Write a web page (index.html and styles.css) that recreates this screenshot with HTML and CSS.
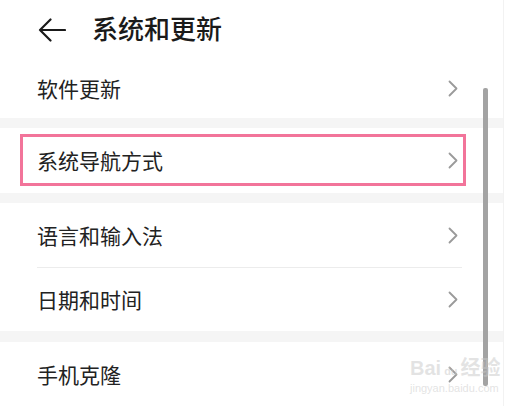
FILE: index.html
```html
<!DOCTYPE html>
<html lang="zh">
<head>
<meta charset="utf-8">
<link rel="stylesheet" href="styles.css">
</head>
<body>
<div class="screen">
  <header class="header">
    <svg class="back" width="28" height="24" viewBox="0 0 28 24"><path d="M27 12H2M12.5 1.5L2 12l10.5 10.5" fill="none" stroke="#1a1a1a" stroke-width="2.2" stroke-linecap="round" stroke-linejoin="round"/></svg>
    <h1 class="title">系统和更新</h1>
  </header>
  <div class="row row-first"><span>软件更新</span><svg class="chev" width="10" height="17" viewBox="0 0 10 17"><path d="M1.5 1.5l7 7-7 7" fill="none" stroke="#9a9a9a" stroke-width="1.8" stroke-linecap="round" stroke-linejoin="round"/></svg></div>
  <div class="band"></div>
  <div class="group-hl">
    <div class="hl-box"><span>系统导航方式</span><svg class="chev" width="10" height="17" viewBox="0 0 10 17"><path d="M1.5 1.5l7 7-7 7" fill="none" stroke="#9a9a9a" stroke-width="1.8" stroke-linecap="round" stroke-linejoin="round"/></svg></div>
  </div>
  <div class="band"></div>
  <div class="row row-a"><span>语言和输入法</span><svg class="chev" width="10" height="17" viewBox="0 0 10 17"><path d="M1.5 1.5l7 7-7 7" fill="none" stroke="#9a9a9a" stroke-width="1.8" stroke-linecap="round" stroke-linejoin="round"/></svg></div>
  <div class="divider"></div>
  <div class="row row-b"><span>日期和时间</span><svg class="chev" width="10" height="17" viewBox="0 0 10 17"><path d="M1.5 1.5l7 7-7 7" fill="none" stroke="#9a9a9a" stroke-width="1.8" stroke-linecap="round" stroke-linejoin="round"/></svg></div>
  <div class="band band-3"></div>
  <div class="row row-last"><span>手机克隆</span><svg class="chev" width="10" height="17" viewBox="0 0 10 17"><path d="M1.5 1.5l7 7-7 7" fill="none" stroke="#9a9a9a" stroke-width="1.8" stroke-linecap="round" stroke-linejoin="round"/></svg></div>
  <div class="scrollbar"></div>
  <div class="watermark"><div class="wm-top">Bai<span class="wm-paw">du</span>经验</div><div class="wm-url">jingyan.baidu.com</div></div>
</div>
</body>
</html>
```

FILE: styles.css
```css
html, body {
  margin: 0;
  padding: 0;
  background: #ffffff;
}
body {
  width: 530px;
  height: 406px;
  overflow: hidden;
  font-family: "Noto Sans CJK SC", "Noto Sans", sans-serif;
  color: #222222;
}
.screen {
  position: relative;
  width: 503px;
  height: 406px;
  border-right: 1px solid #f2f2f2;
  box-sizing: content-box;
}
.header {
  height: 58px;
  display: flex;
  align-items: center;
  padding-left: 38px;
  gap: 26px;
  box-sizing: border-box;
  padding-top: 2px;
}
.back {
  display: block;
}
.title {
  margin: 0;
  font-size: 26px;
  font-weight: 500;
  color: #1a1a1a;
  line-height: 1;
  position: relative;
  top: -2px;
}
.row {
  display: flex;
  align-items: center;
  justify-content: space-between;
  padding: 0 45px 0 37px;
  font-size: 21px;
  line-height: 1;
  box-sizing: border-box;
}
.row-first { height: 60px; }
.row-a { height: 64px; }
.row-b { height: 63px; }
.row-last { height: 64px; }
.chev { display: block; }
.band {
  height: 10px;
  background: #f5f5f5;
}
.band-3 { height: 11px; }
.group-hl {
  height: 65px;
  padding: 6px 37px 7px 20px;
  box-sizing: border-box;
}
.hl-box {
  height: 100%;
  border: 3px solid #f2749a;
  box-sizing: border-box;
  display: flex;
  align-items: center;
  justify-content: space-between;
  padding: 0 5px 0 14px;
  font-size: 21px;
  line-height: 1;
}
.divider {
  height: 1px;
  margin: 0 41px 0 37px;
  background: #ececec;
}
.scrollbar {
  position: absolute;
  left: 483px;
  top: 88px;
  width: 5px;
  height: 298px;
  background: #a3a3a3;
  border-radius: 2px;
}
.watermark {
  position: absolute;
  left: 410px;
  top: 358px;
  color: rgba(200, 200, 200, 0.5);
  font-family: "Liberation Sans", "Noto Sans CJK SC", sans-serif;
  line-height: 1;
  white-space: nowrap;
}
.wm-top {
  font-size: 20px;
  font-weight: 700;
}
.wm-paw {
  font-size: 11px;
  margin: 0 3px;
}
.wm-url {
  font-size: 11px;
  margin-top: 5px;
}
```
